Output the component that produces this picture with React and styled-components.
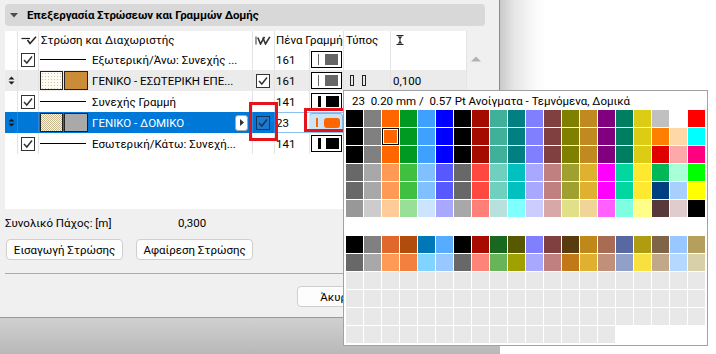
import React from 'react';
import styled, { createGlobalStyle } from 'styled-components';

const GlobalStyle = createGlobalStyle`
  html, body { margin: 0; padding: 0; background: #fff; }
  body { font-family: Roboto, "Liberation Sans", sans-serif; font-size: 11.5px; color: #000; }
  * { box-sizing: border-box; }
`;

const COLS = '13px 21px 214px 22px 35px 34px 47px 76px';

const Page = styled.div`
  position: relative;
  width: 716px;
  height: 354px;
  overflow: hidden;
  display: grid;
  grid-template-columns: 500px 1fr;
  grid-template-rows: 318px 1fr;
  background: #fff;
`;

const Dialog = styled.div`
  background: #f0f0f0;
  border-right: 1px solid #8a8a8a;
  border-bottom: 1px solid #9a9a9a;
  padding: 4px 14px 0 5px;
  display: flex;
  flex-direction: column;
`;

const RightShade = styled.div`
  background: linear-gradient(to right, #c9c9c9 0, #e6e6e6 14px, #fbfbfb 36px, #fff 46px);
`;

const BottomShade = styled.div`
  background: linear-gradient(#d0d0d0, #b8b8b8);
`;

const Corner = styled.div`
  background: #fff;
`;

const HeaderBar = styled.div`
  height: 22px;
  border-radius: 4px;
  background: #d8d8d8;
  display: flex;
  align-items: center;
  padding-left: 5px;
  gap: 9px;
  font-weight: bold;
  font-size: 11.5px;
  letter-spacing: -0.1px;
  margin-bottom: 5px;
`;

const TableWrap = styled.div`
  display: flex;
  height: 178px;
`;

const Table = styled.div`
  width: 462px;
  background: #fff;
  display: flex;
  flex-direction: column;
`;

const ScrollTrack = styled.div`
  flex: 1;
  display: flex;
  justify-content: center;
  padding-top: 25px;
`;

const Row = styled.div`
  display: grid;
  grid-template-columns: ${COLS};
  height: ${p => p.$h || 21}px;
  background: ${p => p.$bg || 'transparent'};
`;

const Cell = styled.div`
  display: flex;
  align-items: center;
  padding-left: ${p => p.$pl || 0}px;
  border-right: 1px solid ${p => (p.$sel ? '#2c88dd' : '#e4e4e4')};
  background: ${p => (p.$sel ? '#0078d7' : 'transparent')};
  color: ${p => (p.$sel ? '#fff' : 'inherit')};
  overflow: hidden;
  white-space: nowrap;
  ${p => (p.$span ? `grid-column: span ${p.$span};` : '')}
  ${p => (p.$edit ? 'border-top: 1px solid #8cc0ee; border-bottom: 1px solid #8cc0ee; background: #fff;' : '')}
`;

const NameText = styled.span`
  margin-left: ${p => p.$ml || 0}px;
  overflow: hidden;
`;

const LineMark = styled.span`
  width: 46px;
  height: 1px;
  margin-left: 1px;
  background: #000;
  flex: none;
`;

const Swatch = styled.span`
  flex: none;
  width: ${p => p.$w}px;
  height: 19px;
  margin-left: ${p => p.$ml || 0}px;
  border: 1px solid #222;
  background: ${p => p.$bg};
  ${p => (p.$size ? `background-size: ${p.$size};` : '')}
`;

const PlayBtn = styled.span`
  margin-left: auto;
  margin-right: 4px;
  width: 13px;
  height: 16px;
  border-radius: 3px;
  background: #fff;
  border: 1px solid #a8a8a8;
  display: flex;
  align-items: center;
  justify-content: center;
`;

const PenBox = styled.span`
  flex: none;
  width: ${p => (p.$kind === 'orange' ? 34 : 31)}px;
  height: ${p => (p.$kind === 'orange' ? 19 : 17)}px;
  margin-left: ${p => (p.$kind === 'orange' ? -1 : 1)}px;
  border: 1px solid ${p => (p.$kind === 'orange' ? '#7fb6e6' : '#000')};
  border-radius: ${p => (p.$kind === 'orange' ? 3 : 0)}px;
  background: ${p => (p.$kind === 'orange' ? '#cce4f7' : '#fff')};
  display: flex;
  align-items: center;
  padding-left: 6px;
  gap: ${p => (p.$kind === 'black' ? 5 : 6)}px;
`;

const PenLine = styled.span`
  flex: none;
  width: ${p => (p.$kind === 'gray' ? 1 : p.$kind === 'black' ? 3 : 2)}px;
  height: ${p => (p.$kind === 'orange' ? 9 : 11)}px;
  background: ${p => (p.$kind === 'gray' ? '#666' : p.$kind === 'black' ? '#000' : '#ff6600')};
`;

const PenFill = styled.span`
  flex: none;
  width: ${p => (p.$kind === 'orange' ? 16 : 13)}px;
  height: ${p => (p.$kind === 'orange' ? 10 : 11)}px;
  border-radius: ${p => (p.$kind === 'orange' ? 3 : 0)}px;
  background: ${p => (p.$kind === 'gray' ? '#666' : p.$kind === 'black' ? '#000' : '#ff6600')};
`;

const TypeMark = styled.span`
  width: 4px;
  height: 11px;
  border: 1px solid #222;
  flex: none;
`;

const TypeMarks = styled.span`
  display: flex;
  gap: 8px;
`;

const SumRow = styled.div`
  display: grid;
  grid-template-columns: 173px auto;
  height: 18px;
  align-items: center;
  margin-top: 5px;
`;

const ButtonRow = styled.div`
  display: flex;
  gap: 13px;
  margin-top: 7px;
  padding-left: 1px;
`;

const Button = styled.div`
  width: ${p => p.$w || 117}px;
  height: 21px;
  border: 1px solid #cfcfcf;
  border-radius: 4px;
  background: #fdfdfd;
  display: flex;
  align-items: center;
  justify-content: center;
  margin-left: ${p => p.$ml || 0}px;
`;

const Separator = styled.div`
  height: 1px;
  background: #ababab;
  margin-top: 13px;
`;

const FooterRow = styled.div`
  display: flex;
  margin-top: 12px;
`;

const Popup = styled.div`
  position: absolute;
  left: 343px;
  top: 90px;
  width: 365px;
  height: 256px;
  background: #fff;
  border: 1px solid #a2a2a2;
  padding: 0 2px 2px 2px;
`;

const PopupTitle = styled.div`
  height: 19px;
  line-height: 20px;
  padding-left: 6px;
  white-space: pre;
`;

const Palette = styled.div`
  display: grid;
  grid-template-columns: repeat(20, 17px);
  grid-auto-rows: 17px;
  gap: 1px;
`;

const Chip = styled.span`
  background: ${p => p.$c};
  ${p => (p.$active ? 'border: 1px solid #000; box-shadow: inset 0 0 0 1px #fff;' : '')}
`;

const Highlight = styled.div`
  position: absolute;
  left: ${p => p.$x}px;
  top: ${p => p.$y}px;
  width: ${p => p.$w}px;
  height: ${p => p.$h}px;
  border: 3px solid #e5141c;
`;

/* ---------- icons ---------- */
const CheckBox = ({ onBlue }) => (
  <svg width="14" height="14" viewBox="0 0 14 14">
    <rect x="0.5" y="0.5" width="13" height="13" fill={onBlue ? '#1a7ad0' : '#fff'} stroke={onBlue ? '#15365a' : '#333'} />
    <path d="M3 7 L5.8 10 L11 3.5" fill="none" stroke={onBlue ? '#15365a' : '#333'} strokeWidth="1.5" />
  </svg>
);

const HeadCheckIcon = () => (
  <svg width="16" height="9" viewBox="0 0 16 9">
    <path d="M0.5 2.5 H9" stroke="#222" strokeWidth="1.2" />
    <path d="M6.5 4 L9 7.5 L15 0.8" fill="none" stroke="#222" strokeWidth="1.5" />
  </svg>
);

const HeadDoubleCheckIcon = () => (
  <svg width="16" height="9" viewBox="0 0 16 9">
    <path d="M1 0.5 V8.5" stroke="#444" strokeWidth="1.1" />
    <path d="M2.8 1.5 L5.5 8 L9.5 0.8" fill="none" stroke="#333" strokeWidth="1.6" />
    <path d="M7.8 1.5 L10.5 8 L14.8 0.8" fill="none" stroke="#333" strokeWidth="1.6" />
  </svg>
);

const ThickIcon = () => (
  <svg width="8" height="10" viewBox="0 0 8 10">
    <path d="M0.5 0.5 H7.5 M0.5 9.5 H7.5 M4 2 V8" stroke="#222" strokeWidth="1" />
    <path d="M1.5 1.5 H6.5 L4 4 Z M1.5 8.5 H6.5 L4 6 Z" fill="#222" />
  </svg>
);

const DragHandle = () => (
  <svg width="7" height="9" viewBox="0 0 7 9">
    <path d="M0.5 3.5 L3.5 0.5 L6.5 3.5 Z M0.5 5.5 L3.5 8.5 L6.5 5.5 Z" fill="#1a1a1a" />
  </svg>
);

const DownTri = () => (
  <svg width="8" height="5" viewBox="0 0 8 5">
    <path d="M0 0 H8 L4 4.5 Z" fill="#4a4a4a" />
  </svg>
);

const UpTri = () => (
  <svg width="10" height="6" viewBox="0 0 10 6">
    <path d="M0 5.5 L5 0.5 L10 5.5 Z" fill="#b2b2b2" />
  </svg>
);

const PlayTri = () => (
  <svg width="4" height="7" viewBox="0 0 4 7">
    <path d="M0 0 L4 3.5 L0 7 Z" fill="#333" />
  </svg>
);

/* ---------- data ---------- */
const DOTS = 'radial-gradient(circle, #d2c49c 0.6px, #fcfaf3 0.9px)';
const CROSS = 'repeating-conic-gradient(#c9b991 0 25%, #f8f4e8 0 50%)';

const rows = [
  { kind: 'line', check: true, name: 'Εξωτερική/Άνω: Συνεχής ...', pen: '161', penKind: 'gray' },
  { kind: 'layer', name: 'ΓΕΝΙΚΟ - ΕΣΩΤΕΡΙΚΗ ΕΠΕ...', hatch: DOTS, hatchSize: '3px 3px', fill: '#cb8c37', check2: true, pen: '161', penKind: 'gray', type: true, thick: '0,100', bg: '#ebebeb' },
  { kind: 'line', check: true, name: 'Συνεχής Γραμμή', pen: '141', penKind: 'black' },
  { kind: 'layer', selected: true, name: 'ΓΕΝΙΚΟ - ΔΟΜΙΚΟ', hatch: CROSS, hatchSize: '2px 2px', fill: '#a9a9a9', check2: true, pen: '23', penKind: 'orange' },
  { kind: 'line', check: true, name: 'Εσωτερική/Κάτω: Συνεχή...', pen: '141', penKind: 'black' },
];

const base1 = ['#000000', '#808080', '#ff6600', '#009a22', '#40a0ff', '#0000ff', '#000000', '#a50c00', '#40b09b', '#008080', '#8080ff', '#804040', '#808000', '#c08a20', '#800080', '#007f60', '#dccd14'];
const base4 = ['#686868', '#a8a8a8', '#ff9a56', '#40c040', '#80c0ff', '#5858ff', '#686868', '#ff4840', '#70d0c0', '#00c0c0', '#a8a8ff', '#c08080', '#a0a030', '#e0b030', '#ff00ff', '#00d8a0', '#ffe830'];
const palette = [
  [...base1, '#c0c0c0', '#ffffff', '#ff0000'],
  [...base1, '#ff8000', '#ffd8a8', '#00ffff'],
  [...base1, '#e00000', '#ffa8a8', '#ff0080'],
  [...base4, '#00b858', '#a8ffd8', '#00ff00'],
  [...base4, '#004080', '#a8d0ff', '#ffff00'],
  ['#989898', '#cccccc', '#ffcc99', '#98e098', '#cce4ff', '#a8a8ff', '#a8a8a8', '#ff8078', '#b8e0dc', '#80ffff', '#ccccff', '#d8a8a8', '#e0e088', '#f0d498', '#ff60ff', '#80ffe0', '#ffff88', '#583838', '#e0cccc', '#000000'],
  Array(20).fill('transparent'),
  ['#000000', '#808080', '#e0682c', '#b04c0c', '#0078b8', '#58acff', '#000000', '#a80c00', '#186820', '#585800', '#8080ff', '#804040', '#583c10', '#c08818', '#a86c54', '#5868a0', '#b09c10', '#806448', '#98c8ff', '#b4a05c'],
  ['#686868', '#a8a8a8', '#ff9a56', '#f48040', '#80d4ff', '#98c8ff', '#686868', '#ff8478', '#68b458', '#a0a000', '#a8a8ff', '#c08080', '#c07818', '#e0b030', '#c09078', '#90a0c8', '#f8e040', '#c0a888', '#b4d8ff', '#d8d0a8'],
  Array(20).fill('#e8e8e8'),
  Array(20).fill('#e8e8e8'),
  Array(20).fill('#e8e8e8'),
  Array(15).fill('#e8e8e8'),
];

function DataRow({ r }) {
  const sel = !!r.selected;
  return (
    <Row $bg={r.bg}>
      <Cell $sel={sel} $pl={3}>{r.kind === 'layer' && <DragHandle />}</Cell>
      <Cell $sel={sel} $pl={3}>{r.check && <CheckBox />}</Cell>
      <Cell $sel={sel}>
        {r.kind === 'line' ? (
          <>
            <LineMark />
            <NameText $ml={6}>{r.name}</NameText>
          </>
        ) : (
          <>
            <Swatch $w={23} $ml={1} $bg={r.hatch} $size={r.hatchSize} />
            <Swatch $w={24} $ml={1} $bg={r.fill} />
            <NameText $ml={4}>{r.name}</NameText>
            {sel && (
              <PlayBtn>
                <PlayTri />
              </PlayBtn>
            )}
          </>
        )}
      </Cell>
      <Cell $sel={sel} $pl={3}>{r.check2 && <CheckBox onBlue={sel} />}</Cell>
      <Cell $pl={1} $edit={sel}>{r.pen}</Cell>
      <Cell $edit={sel}>
        <PenBox $kind={r.penKind}>
          <PenLine $kind={r.penKind} />
          <PenFill $kind={r.penKind} />
        </PenBox>
      </Cell>
      <Cell $pl={6} $edit={sel}>
        {r.type && (
          <TypeMarks>
            <TypeMark />
            <TypeMark />
          </TypeMarks>
        )}
      </Cell>
      <Cell $pl={2} $edit={sel}>{r.thick}</Cell>
    </Row>
  );
}

export default function App() {
  return (
    <>
      <GlobalStyle />
      <Page>
        <Dialog>
          <HeaderBar>
            <DownTri />
            <span>Επεξεργασία Στρώσεων και Γραμμών Δομής</span>
          </HeaderBar>
          <TableWrap>
            <Table>
              <Row $h={18}>
                <Cell />
                <Cell $pl={3}>
                  <HeadCheckIcon />
                </Cell>
                <Cell $pl={2}>Στρώση και Διαχωριστής</Cell>
                <Cell $pl={2}>
                  <HeadDoubleCheckIcon />
                </Cell>
                <Cell $pl={1} $span={2}>Πένα Γραμμής</Cell>
                <Cell $pl={2}>Τύπος</Cell>
                <Cell $pl={5}>
                  <ThickIcon />
                </Cell>
              </Row>
              {rows.map((r, i) => (
                <DataRow key={i} r={r} />
              ))}
            </Table>
            <ScrollTrack>
              <UpTri />
            </ScrollTrack>
          </TableWrap>
          <SumRow>
            <span>Συνολικό Πάχος: [m]</span>
            <span>0,300</span>
          </SumRow>
          <ButtonRow>
            <Button>Εισαγωγή Στρώσης</Button>
            <Button>Αφαίρεση Στρώσης</Button>
          </ButtonRow>
          <Separator />
          <FooterRow>
            <Button $w={80} $ml={292}>Άκυρο</Button>
          </FooterRow>
        </Dialog>
        <RightShade />
        <BottomShade />
        <Corner />

        <Highlight $x={249} $y={102} $w={29} $h={39} />
        <Highlight $x={304} $y={108} $w={48} $h={24} />

        <Popup>
          <PopupTitle>{'23  0.20 mm /  0.57 Pt Ανοίγματα - Τεμνόμενα, Δομικά'}</PopupTitle>
          <Palette>
            {palette.map((row, ri) =>
              row.map((c, ci) => <Chip key={`${ri}-${ci}`} $c={c} $active={ri === 1 && ci === 2} />)
            )}
          </Palette>
        </Popup>
      </Page>
    </>
  );
}
